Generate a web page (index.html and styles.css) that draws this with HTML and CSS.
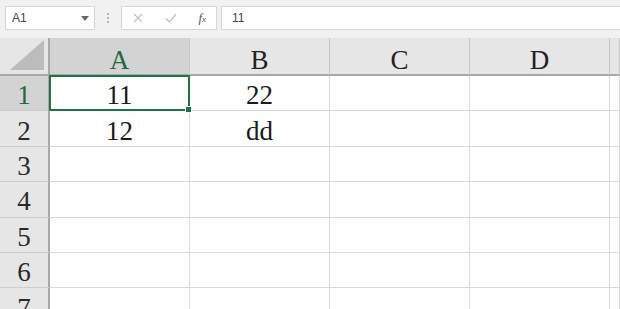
FILE: index.html
```html
<!DOCTYPE html>
<html lang="en">
<head>
    <meta charset="UTF-8">
    <title>Sheet1</title>
    <link rel="stylesheet" href="styles.css">
</head>
<body>

<div class="toolbar">
    <div class="namebox">
        <span>A1</span>
        <svg class="caret" width="8" height="5" viewBox="0 0 8 5"><path d="M0 0h8L4 5z" fill="#6a6a6a"/></svg>
    </div>
    <div class="grip"><i></i><i></i><i></i></div>
    <div class="fbuttons">
        <svg width="12" height="12" viewBox="0 0 12 12"><path d="M2 2l8 8M10 2l-8 8" stroke="#c2c2c2" stroke-width="1.2"/></svg>
        <svg width="14" height="12" viewBox="0 0 14 12"><path d="M2 6.5l3.5 3.5L12 2" stroke="#c2c2c2" stroke-width="1.4" fill="none"/></svg>
        <span class="fx">f<small>x</small></span>
    </div>
    <div class="formula">11</div>
</div>

<div class="sheet">
    <div class="corner"><svg width="34" height="30" viewBox="0 0 34 30"><path d="M34 0V30H0z" fill="#bcbcbc"/></svg></div>
    <div class="colhead active">A</div>
    <div class="colhead">B</div>
    <div class="colhead">C</div>
    <div class="colhead">D</div>
    <div class="colhead"></div>

    <div class="rowhead active">1</div>
    <div class="cell selected">11</div>
    <div class="cell">22</div>
    <div class="cell"></div>
    <div class="cell"></div>
    <div class="cell"></div>

    <div class="rowhead">2</div>
    <div class="cell">12</div>
    <div class="cell">dd</div>
    <div class="cell"></div>
    <div class="cell"></div>
    <div class="cell"></div>

    <div class="rowhead">3</div>
    <div class="cell"></div><div class="cell"></div><div class="cell"></div><div class="cell"></div><div class="cell"></div>
    <div class="rowhead">4</div>
    <div class="cell"></div><div class="cell"></div><div class="cell"></div><div class="cell"></div><div class="cell"></div>
    <div class="rowhead">5</div>
    <div class="cell"></div><div class="cell"></div><div class="cell"></div><div class="cell"></div><div class="cell"></div>
    <div class="rowhead">6</div>
    <div class="cell"></div><div class="cell"></div><div class="cell"></div><div class="cell"></div><div class="cell"></div>
    <div class="rowhead">7</div>
    <div class="cell"></div><div class="cell"></div><div class="cell"></div><div class="cell"></div><div class="cell"></div>
</div>

</body>
</html>
```

FILE: styles.css
```css
body {
    margin: 0;
    width: 620px;
    height: 309px;
    overflow: hidden;
    background: #ffffff;
    font-family: 'Liberation Sans', Arial, sans-serif;
}
.toolbar {
    display: flex;
    align-items: center;
    height: 38px;
    padding: 0 0 2px 5px;
    box-sizing: border-box;
    background: #f1f1f1;
}
.namebox {
    display: flex;
    align-items: center;
    justify-content: space-between;
    width: 90px;
    height: 24px;
    padding: 0 5px 0 6px;
    box-sizing: border-box;
    background: #fff;
    border: 1px solid #d6d6d6;
    font-size: 12px;
    color: #444;
}
.caret {
    margin-top: 1px;
}
.grip {
    display: flex;
    flex-direction: column;
    gap: 2px;
    margin: 0 12px 0 12px;
}
.grip i {
    width: 2px;
    height: 2px;
    background: #b8b8b8;
}
.fbuttons {
    display: flex;
    align-items: center;
    justify-content: space-between;
    width: 96px;
    height: 24px;
    padding: 0 10px 0 10px;
    box-sizing: border-box;
    background: #fff;
    border: 1px solid #d6d6d6;
}
.fx {
    font-family: 'Liberation Serif', serif;
    font-style: italic;
    font-size: 13px;
    color: #555;
}
.fx small {
    font-size: 9px;
}
.formula {
    flex: 1;
    height: 24px;
    margin-left: 4px;
    padding-left: 10px;
    box-sizing: border-box;
    line-height: 22px;
    background: #fff;
    border: 1px solid #d6d6d6;
    border-right: none;
    font-size: 12px;
    color: #444;
}
.sheet {
    display: grid;
    grid-template-columns: 50px repeat(4, 140px) 1fr;
    grid-template-rows: 38px;
    grid-auto-rows: 35.4px;
    font-family: 'Liberation Serif', 'Times New Roman', serif;
    font-size: 27px;
}
.corner {
    display: flex;
    align-items: flex-end;
    justify-content: flex-end;
    padding: 0 4px 4px 0;
    background: #e6e6e6;
    border-right: 2px solid #a8a8a8;
    border-bottom: 2px solid #a8a8a8;
    box-sizing: border-box;
}
.colhead {
    display: flex;
    align-items: center;
    justify-content: center;
    padding-top: 8px;
    background: #e6e6e6;
    border-right: 1px solid #c8c8c8;
    border-bottom: 2px solid #a8a8a8;
    box-sizing: border-box;
    color: #222;
}
.colhead.active {
    background: #d3d3d3;
    color: #1f6b3f;
}
.rowhead {
    display: flex;
    align-items: center;
    justify-content: center;
    padding-top: 5px;
    background: #e6e6e6;
    border-right: 2px solid #a8a8a8;
    border-bottom: 1px solid #cdcdcd;
    box-sizing: border-box;
    color: #2a2a2a;
}
.rowhead.active {
    background: #d3d3d3;
    color: #1f6b3f;
}
.cell {
    display: flex;
    align-items: center;
    justify-content: center;
    padding-top: 5px;
    border-right: 1px solid #dadada;
    border-bottom: 1px solid #dadada;
    box-sizing: border-box;
    color: #1a1a1a;
}
.cell.selected {
    position: relative;
}
.cell.selected::before {
    content: "";
    position: absolute;
    left: -1px;
    top: -1px;
    right: -1px;
    bottom: -1px;
    border: 2px solid #217346;
}
.cell.selected::after {
    content: "";
    position: absolute;
    right: -3px;
    bottom: -3px;
    width: 5px;
    height: 5px;
    background: #217346;
    border: 1px solid #fff;
}
```
